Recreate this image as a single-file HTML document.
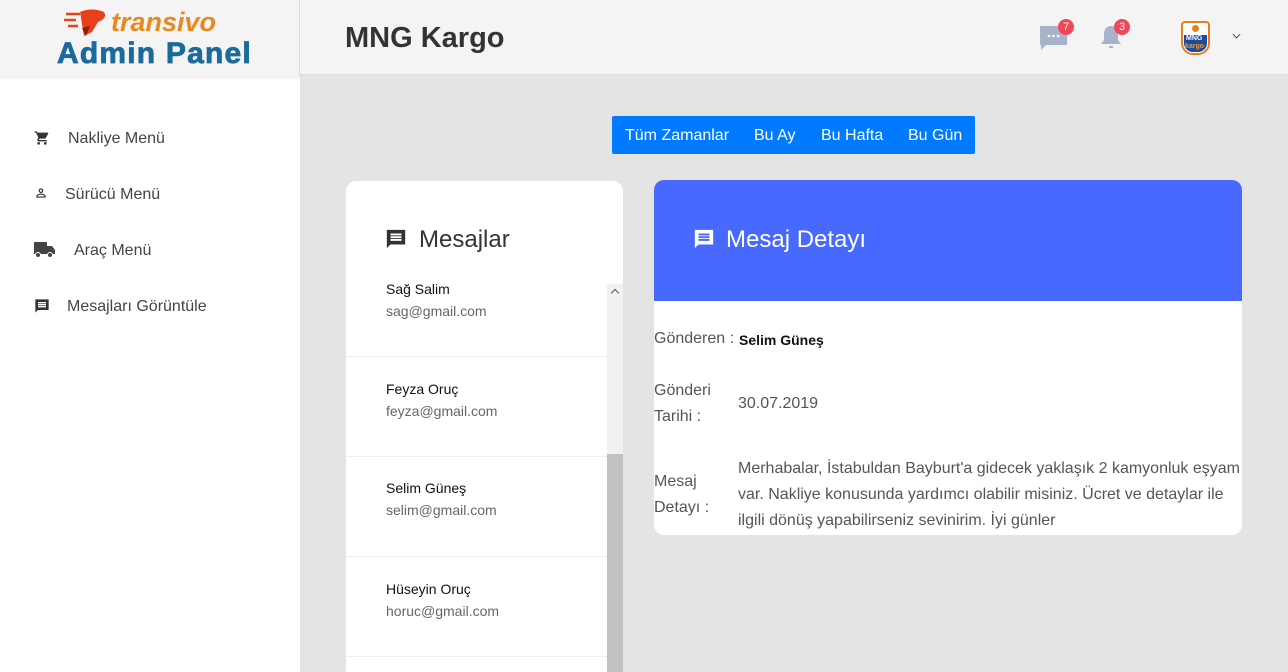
<!DOCTYPE html>
<html><head><meta charset="utf-8"><style>
*{margin:0;padding:0;box-sizing:border-box}
html,body{width:1288px;height:672px;overflow:hidden}
body{background:#e4e4e4;font-family:"Liberation Sans",Arial,sans-serif;position:relative}
.a{position:absolute}
.side{left:0;top:0;width:300px;height:672px;background:#fff}
.logo{left:0;top:0;width:300px;height:76px;background:#f4f4f4;border-right:1px solid #ddd;box-shadow:0 2px 3px rgba(0,0,0,.08)}
.hdr{left:300px;top:0;width:988px;height:75px;background:#f4f4f4;border-bottom:1px solid #ddd}
.nav{font-size:16px;color:#444}
.btns{left:612px;top:116px;width:363px;height:38px;background:#007bff;border-radius:2px;color:#fff;font-size:16px}
.btns span{position:absolute;top:11px}
.card{background:#fff;border-radius:10px;overflow:hidden}
.item{position:absolute;left:0;width:261px;height:100px;border-bottom:1px solid #eee}
.item b{position:absolute;left:40px;top:24px;font-weight:normal;font-size:14px;color:#111}
.item i{position:absolute;left:40px;top:46px;font-style:normal;font-size:14px;color:#666}
.lbl{font-size:16px;color:#555;line-height:26px}
.badge{width:16px;height:16px;border-radius:50%;background:#f0465a;color:#fff;font-size:11px;text-align:center;line-height:16px}
</style></head><body>
<div class="a side"></div>
<div class="a logo">
 <svg class="a" style="left:62px;top:8px" width="50" height="30" viewBox="0 0 50 30">
  <path d="M4 6h14M2 12h12M6 18h10" stroke="#e2461d" stroke-width="2.5"/>
  <path d="M18 4 Q30 -1 42 4 Q46 10 36 14 L30 24 L22 28 Z" fill="#e8401c"/>
  <path d="M20 20 L28 18 L24 28Z" fill="#8b1d0b"/>
 </svg>
 <div class="a" style="left:111px;top:7px;font-size:27px;font-weight:bold;font-style:italic;color:#e8891c;line-height:30px">transivo</div>
 <div class="a" style="left:57px;top:37px;font-size:30px;font-weight:bold;color:#1a6b9c;line-height:34px;letter-spacing:1.2px;-webkit-text-stroke:0.8px #1a6b9c">Admin Panel</div>
</div>
<div class="a hdr"></div>
<div class="a" style="left:345px;top:22px;font-size:29px;font-weight:bold;color:#333">MNG Kargo</div>
<svg class="a" style="left:1040px;top:26px" width="28" height="24" viewBox="0 0 28 24"><path d="M0 0h27v19H6l-5 5V19H0z" fill="#a8b3cb"/><circle cx="9" cy="10" r="1.3" fill="#fff"/><circle cx="13.5" cy="10" r="1.3" fill="#fff"/><circle cx="18" cy="10" r="1.3" fill="#fff"/></svg>
<div class="a badge" style="left:1058px;top:19px">7</div>
<svg class="a" style="left:1099px;top:24px" width="24" height="26" viewBox="0 0 24 26"><path d="M12 2c-5 0-7 4-7 8v6l-3 4h20l-3-4v-6c0-4-2-8-7-8z" fill="#a8b3cb"/><path d="M10 22h4v2h-4z" fill="#a8b3cb"/></svg>
<div class="a badge" style="left:1114px;top:19px">3</div>
<div class="a" style="left:1181px;top:21px;width:29px;height:34px;border:2px solid #e87f1d;border-radius:4px 4px 12px 12px;background:#fff;overflow:hidden">
 <div class="a" style="left:1px;top:12px;width:23px;height:17px;background:#1e4aa0;border-radius:0 0 9px 9px"></div>
 <div class="a" style="left:3px;top:12px;font-size:7px;font-weight:bold;color:#fff;line-height:8px">MNG</div>
 <div class="a" style="left:2px;top:20px;font-size:7px;font-weight:bold;color:#f39c1d;line-height:8px">kargo</div>
 <div class="a" style="left:9px;top:2px;width:7px;height:7px;background:#e87f1d;border-radius:50%"></div>
</div>
<div class="a" style="left:1233px;top:31px;width:7px;height:7px;border-right:1.5px solid #333;border-bottom:1.5px solid #333;transform:rotate(45deg) scale(.8)"></div>

<svg class="a" style="left:34px;top:130px" width="16" height="16" viewBox="0 0 24 24"><path d="M7 18a2 2 0 100 4 2 2 0 000-4zM1 2v2h2l3.6 7.6-1.4 2.4c-.7 1.3.3 3 1.8 3h12v-2H7.4l1.1-2h7.5c.8 0 1.4-.4 1.7-1l3.6-6.5A1 1 0 0020.4 4H5.2l-.9-2H1zm16 16a2 2 0 100 4 2 2 0 000-4z" fill="#333"/></svg>
<div class="a nav" style="left:68px;top:130px">Nakliye Menü</div>
<svg class="a" style="left:34px;top:186px" width="14" height="14" viewBox="0 0 24 24"><path d="M12 4a4 4 0 100 8 4 4 0 000-8zm0 2a2 2 0 110 4 2 2 0 010-4zm0 7c-3 0-8 1.5-8 4.5V20h16v-2.5c0-3-5-4.5-8-4.5zm0 2c3 0 6 1.4 6 2.5v.5H6v-.5C6 16.4 9 15 12 15z" fill="#333"/></svg>
<div class="a nav" style="left:65px;top:186px">Sürücü Menü</div>
<svg class="a" style="left:34px;top:241px" width="22" height="18" viewBox="0 0 22 18"><rect x="0" y="1" width="13" height="12" fill="#444"/><path d="M13 5h5l3 4v4h-8z" fill="#444"/><circle cx="4" cy="14" r="2.5" fill="#444" stroke="#fff"/><circle cx="16" cy="14" r="2.5" fill="#444" stroke="#fff"/></svg>
<div class="a nav" style="left:74px;top:242px">Araç Menü</div>
<svg class="a" style="left:34px;top:298px" width="16" height="16" viewBox="0 0 24 24"><path d="M22 2H2v20l4-4h16zM6 6h12v2H6zm0 3h12v2H6zm0 3h12v2H6z" fill="#333" fill-rule="evenodd"/></svg>
<div class="a nav" style="left:67px;top:298px">Mesajları Görüntüle</div>

<div class="a btns"><span style="left:13px">Tüm Zamanlar</span><span style="left:142px">Bu Ay</span><span style="left:209px">Bu Hafta</span><span style="left:296px">Bu Gün</span></div>

<div class="a card" style="left:346px;top:181px;width:277px;height:491px;border-radius:10px 10px 0 0">
 <svg class="a" style="left:39px;top:47px" width="22" height="22" viewBox="0 0 24 24"><path d="M22 2H2v20l4-4h16zM6 6h12v2H6zm0 3h12v2H6zm0 3h12v2H6z" fill="#333" fill-rule="evenodd"/></svg>
 <div class="a" style="left:73px;top:45px;font-size:24px;color:#333">Mesajlar</div>
 <div class="item" style="top:83px;height:93px"><b style="top:17px">Sağ Salim</b><i style="top:39px">sag@gmail.com</i></div>
 <div class="item" style="top:176px"><b>Feyza Oruç</b><i>feyza@gmail.com</i></div>
 <div class="item" style="top:276px"><b style="top:23px">Selim Güneş</b><i style="top:45px">selim@gmail.com</i></div>
 <div class="item" style="top:376px"><b>Hüseyin Oruç</b><i>horuc@gmail.com</i></div>
 <div class="a" style="left:261px;top:103px;width:16px;height:400px;background:#f1f1f1"></div>
 <div class="a" style="left:261px;top:273px;width:16px;height:230px;background:#c1c1c1"></div>
 <div class="a" style="left:266px;top:109px;width:6px;height:6px;border-left:1.5px solid #555;border-top:1.5px solid #555;transform:rotate(45deg)"></div>
</div>

<div class="a card" style="left:654px;top:180px;width:588px;height:355px">
 <div class="a" style="left:0;top:0;width:588px;height:121px;background:#4869fe"></div>
 <svg class="a" style="left:39px;top:48px" width="22" height="22" viewBox="0 0 24 24"><path d="M22 2H2v20l4-4h16zM6 6h12v2H6zm0 3h12v2H6zm0 3h12v2H6z" fill="#fff" fill-rule="evenodd"/></svg>
 <div class="a" style="left:72px;top:46px;font-size:24px;color:#fff">Mesaj Detayı</div>
 <div class="a lbl" style="left:0;top:146px">Gönderen :</div>
 <div class="a" style="left:85px;top:152px;font-size:14px;font-weight:bold;color:#111">Selim Güneş</div>
 <div class="a lbl" style="left:0;top:198px">Gönderi<br>Tarihi :</div>
 <div class="a lbl" style="left:84px;top:211px">30.07.2019</div>
 <div class="a lbl" style="left:0;top:289px">Mesaj<br>Detayı :</div>
 <div class="a lbl" style="left:84px;top:276px;width:504px">Merhabalar, İstabuldan Bayburt'a gidecek yaklaşık 2 kamyonluk eşyam var. Nakliye konusunda yardımcı olabilir misiniz. Ücret ve detaylar ile ilgili dönüş yapabilirseniz sevinirim. İyi günler</div>
</div>
</body></html>
